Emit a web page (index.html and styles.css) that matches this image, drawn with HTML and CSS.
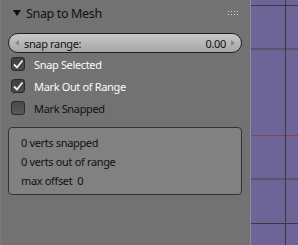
FILE: index.html
```html
<!DOCTYPE html>
<html lang="en">
<head>
    <meta charset="UTF-8">
    <title>Snap to Mesh</title>
    <link rel="stylesheet" href="styles.css">
</head>
<body>

    <!-- Tool panel -->
    <div class="panel">
        <div class="panel-header">
            <svg class="collapse-arrow" width="8" height="8" viewBox="0 0 8 8">
                <polygon points="0,1 8,1 4,7" fill="#111"/>
            </svg>
            <span class="panel-title">Snap to Mesh</span>
            <svg class="drag-dots" width="12" height="5" viewBox="0 0 12 5">
                <rect x="0" y="0" width="1" height="1" fill="#d0d0d0"/>
                <rect x="3" y="0" width="1" height="1" fill="#d0d0d0"/>
                <rect x="6" y="0" width="1" height="1" fill="#d0d0d0"/>
                <rect x="9" y="0" width="1" height="1" fill="#d0d0d0"/>
                <rect x="0" y="3" width="1" height="1" fill="#d0d0d0"/>
                <rect x="3" y="3" width="1" height="1" fill="#d0d0d0"/>
                <rect x="6" y="3" width="1" height="1" fill="#d0d0d0"/>
                <rect x="9" y="3" width="1" height="1" fill="#d0d0d0"/>
            </svg>
        </div>

        <div class="slider">
            <span class="slider-arrow left"></span>
            <span class="slider-label">snap range:</span>
            <span class="slider-value">0.00</span>
            <span class="slider-arrow right"></span>
        </div>

        <div class="check-row checked">
            <span class="check-box">
                <svg width="10" height="9" viewBox="0 0 10 9"><polyline points="1,4.5 4,7.5 9.5,0.5" fill="none" stroke="#eee" stroke-width="1.8"/></svg>
            </span>
            <span class="check-label">Snap Selected</span>
        </div>
        <div class="check-row checked">
            <span class="check-box">
                <svg width="10" height="9" viewBox="0 0 10 9"><polyline points="1,4.5 4,7.5 9.5,0.5" fill="none" stroke="#eee" stroke-width="1.8"/></svg>
            </span>
            <span class="check-label">Mark Out of Range</span>
        </div>
        <div class="check-row">
            <span class="check-box"></span>
            <span class="check-label">Mark Snapped</span>
        </div>

        <!-- Result box -->
        <div class="info-box">
            <p>0 verts snapped</p>
            <p>0 verts out of range</p>
            <p>max offset&nbsp; 0</p>
        </div>
    </div>

    <!-- 3D viewport -->
    <div class="viewport">
        <div class="grid-line h dark" style="top: 5px"></div>
        <div class="grid-line h soft" style="top: 48px"></div>
        <div class="grid-line h red" style="top: 135px"></div>
        <div class="grid-line h soft" style="top: 178px"></div>
        <div class="grid-line h dark" style="top: 223px"></div>
        <div class="grid-line v dark" style="left: 34px"></div>
    </div>

</body>
</html>
```

FILE: styles.css
```css
html, body {
    margin: 0;
    height: 100%;
}

body {
    display: flex;
    font-family: "Noto Sans", "DejaVu Sans", sans-serif;
    font-size: 11px;
    letter-spacing: -0.35px;
    background-color: #727272;
    overflow: hidden;
}

.panel {
    width: 250px;
    background-color: #727272;
    border-left: 1px solid #7c7c7c;
    box-sizing: border-box;
}

.panel-header {
    height: 26px;
    display: flex;
    align-items: center;
    padding-left: 12px;
    padding-right: 10px;
}

.collapse-arrow {
    margin-right: 5px;
}

.panel-title {
    flex: 1;
    font-size: 12.5px;
    color: #111;
}

.slider {
    margin: 7px 8px 0 7px;
    height: 18px;
    border: 1px solid #222;
    border-radius: 10px;
    background: linear-gradient(#c8c8c8, #a6a6a6);
    display: flex;
    align-items: center;
    padding: 0 6px;
    color: #111;
}

.slider-label {
    flex: 1;
    margin-left: 5px;
}

.slider-value {
    margin-right: 5px;
}

.slider-arrow {
    width: 0;
    height: 0;
    border-top: 3px solid transparent;
    border-bottom: 3px solid transparent;
}

.slider-arrow.left {
    border-right: 4px solid #8a8a8a;
}

.slider-arrow.right {
    border-left: 4px solid #8a8a8a;
}

.check-row {
    display: flex;
    align-items: center;
    height: 22px;
    padding-left: 10px;
    color: #111;
}

.check-row:first-of-type {
    margin-top: 3px;
}

.check-box {
    width: 12px;
    height: 12px;
    border: 1px solid #2a2a2a;
    border-radius: 3px;
    background: linear-gradient(#3e3e3e, #4c4c4c);
    display: flex;
    align-items: center;
    justify-content: center;
    margin-right: 9px;
}

.check-row:not(.checked) .check-box {
    background: linear-gradient(#4a4a4a, #5a5a5a);
}

.check-row.checked .check-label {
    color: #fafafa;
}

.info-box {
    margin: 8px 8px 0 7px;
    border: 1px solid #333;
    border-radius: 4px;
    background-color: #818181;
    padding: 5px 12px 4px;
    color: #111;
}

.info-box p {
    margin: 0;
    line-height: 19px;
}

.viewport {
    flex: 1;
    position: relative;
    background-color: #6d6597;
    border-left: 1px solid #8c8aa0;
}

.grid-line {
    position: absolute;
}

.grid-line.h {
    left: 0;
    right: 0;
    height: 1px;
}

.grid-line.v {
    top: 0;
    bottom: 0;
    width: 1px;
}

.grid-line.dark {
    background-color: #3a3844;
}

.grid-line.soft {
    height: 2px;
    background-color: #5a566e;
}

.grid-line.red {
    background-color: #9a3a50;
}
```
